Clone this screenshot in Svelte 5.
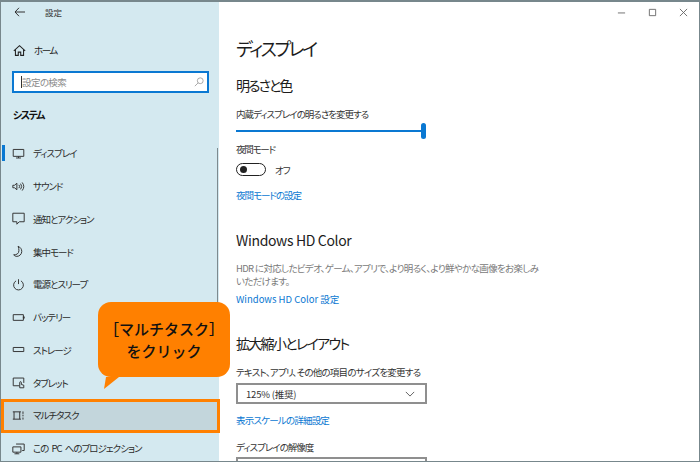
<script>
	const navItems = [
		{ label: 'ディスプレイ', icon: 'display', current: true },
		{ label: 'サウンド', icon: 'sound' },
		{ label: '通知とアクション', icon: 'notify' },
		{ label: '集中モード', icon: 'moon' },
		{ label: '電源とスリープ', icon: 'power' },
		{ label: 'バッテリー', icon: 'battery' },
		{ label: 'ストレージ', icon: 'storage' },
		{ label: 'タブレット', icon: 'tablet' },
		{ label: 'マルチタスク', icon: 'multi', selected: true },
		{ label: 'この PC へのプロジェクション', icon: 'project' }
	];
</script>

{#snippet navIcon(name)}
	<svg class="nav-icon" viewBox="0 0 16 16" fill="none" stroke="#333" stroke-width="1.2">
		{#if name === 'display'}
			<path d="M1.500 3h13v8.500h-13zM8 11.500v2M5 13.500h6" />
		{:else if name === 'sound'}
			<path d="M1 6.500h2L6 4v8L3 9.500H1zM8.500 6a3 3 0 0 1 0 4M10.500 4.500a5.500 5.500 0 0 1 0 7M12.500 3a8 8 0 0 1 0 10" />
		{:else if name === 'notify'}
			<path d="M1 1.500h14v10.500H9L6 15v-3H1z" />
		{:else if name === 'moon'}
			<path d="M7.500 1.500c3 1.500 4.500 3.500 4.500 6.500 0 3.500-3 6-6 6-1.500 0-3-.6-4-2 3.500.5 6.500-1.500 6.500-5 0-2-.2-3.500-1-5.500z" />
		{:else if name === 'power'}
			<path d="M5 3.500a6 6 0 1 0 6 0M8 1.500v6" />
		{:else if name === 'battery'}
			<path d="M1.500 4.500h12.500v7H1.500zM14 7h1v2h-1z" />
		{:else if name === 'storage'}
			<path d="M1.500 5.500h13v5h-13z" />
		{:else if name === 'tablet'}
			<path d="M9 12H1.500V2.500h13v6M9.500 14.500V8a1 1 0 0 1 2 0v2.500l3 .8v3.200z" />
		{:else if name === 'multi'}
			<path d="M1 3.500h10M1 12.500h10M2.500 3.500v9M9.500 3.500v9M13.500 3v3M13.500 7v2M13.500 10.500v2.500" />
		{:else}
			<path d="M5 2.500h10v8h-2.500M1 6h10v6.500H1zM3 14.500h6M6 12.500v2" />
		{/if}
	</svg>
{/snippet}

<div class="window">
	<aside class="sidebar">
		<header class="titlebar">
			<svg class="back" viewBox="0 0 12 10" fill="none" stroke="#333" stroke-width="1">
				<path d="M5 .8 1 5l4 4.200M1 5h10" />
			</svg>
			<span class="app-title">設定</span>
		</header>

		<div class="home">
			<svg class="nav-icon" viewBox="0 0 16 16" fill="none" stroke="#222" stroke-width="1.300">
				<path d="M1 8.500 8 2l7 6.500M3 7v7h3.500v-4h3v4H13V7" />
			</svg>
			<span class="home-text">ホーム</span>
		</div>

		<div class="search">
			<span class="caret"></span>
			<span class="placeholder">設定の検索</span>
			<svg class="search-icon" viewBox="0 0 12 12" fill="none" stroke="#9a9a9a" stroke-width="1">
				<circle cx="7.500" cy="4.500" r="3.500" />
				<path d="M5 7 1 11" />
			</svg>
		</div>

		<div class="section-label">システム</div>

		<nav class="nav">
			{#each navItems as item}
				<div class="nav-item" class:selected={item.selected}>
					{#if item.current}<span class="current-bar"></span>{/if}
					{@render navIcon(item.icon)}
					<span>{item.label}</span>
				</div>
			{/each}
		</nav>

		<div class="scrollbar"></div>
	</aside>

	<main class="content">
		<h1>ディスプレイ</h1>

		<h2 class="first">明るさと色</h2>
		<p class="label">内蔵ディスプレイの明るさを変更する</p>
		<div class="slider"><span class="thumb"></span></div>

		<p class="label night">夜間モード</p>
		<div class="toggle-row">
			<span class="toggle"><span class="knob"></span></span>
			<span class="toggle-text">オフ</span>
		</div>
		<a class="link night-link" href="#night">夜間モードの設定</a>

		<h2 class="hd">Windows HD Color</h2>
		<p class="desc">HDR に対応したビデオ、ゲーム、アプリで、より明るく、より鮮やかな画像をお楽しみ<br />いただけます。</p>
		<a class="link hd-link" href="#hd">Windows HD Color 設定</a>

		<h2 class="scale">拡大縮小とレイアウト</h2>
		<p class="label tight">テキスト、アプリ、その他の項目のサイズを変更する</p>
		<div class="select">
			<span>125% (推奨)</span>
			<svg viewBox="0 0 12 7" fill="none" stroke="#444" stroke-width="1"><path d="M1 1l5 5 5-5" /></svg>
		</div>
		<a class="link scale-link" href="#scale">表示スケールの詳細設定</a>
		<p class="label res">ディスプレイの解像度</p>
		<div class="select partial"></div>
	</main>

	<div class="controls">
		<svg viewBox="0 0 10 10" stroke="#666" fill="none"><path d="M1 5.500h8" /></svg>
		<svg viewBox="0 0 10 10" stroke="#666" fill="none"><path d="M1.500 1.500h7v7h-7z" /></svg>
		<svg viewBox="0 0 10 10" stroke="#666" fill="none"><path d="M1 1l8 8M9 1l-8 8" /></svg>
	</div>

	<div class="callout">
		<span>［マルチタスク］<br />をクリック</span>
		<svg class="tail" viewBox="0 0 15 12"><path d="M2 0h13L0 12z" fill="#ff8000" /></svg>
	</div>
</div>

<style>
	:global(body) {
		margin: 0;
	}

	.window {
		position: relative;
		display: flex;
		box-sizing: border-box;
		width: 700px;
		height: 462px;
		overflow: hidden;
		border: 1px solid #77878c;
		border-top-width: 2px;
		background: #fff;
		color: #222;
		font-family: 'Noto Sans CJK JP', 'Noto Sans', sans-serif;
		font-size: 9.500px;
		font-feature-settings: 'palt';
	}

	.sidebar {
		position: relative;
		flex: 0 0 218px;
		background: #d4e9f0;
	}

	.titlebar {
		display: flex;
		align-items: center;
		height: 20px;
		padding-left: 13px;
	}

	.back {
		width: 12px;
		height: 10px;
	}

	.app-title {
		margin-left: 19px;
		font-size: 8.500px;
		color: #333;
	}

	.home {
		display: flex;
		align-items: center;
		gap: 8px;
		height: 20px;
		margin-top: 18px;
		padding-left: 12px;
	}

	.home-text {
		letter-spacing: -1.500px;
	}

	.nav-icon {
		flex: none;
		width: 13px;
		height: 13px;
	}

	.search {
		display: flex;
		align-items: center;
		box-sizing: border-box;
		height: 22px;
		margin: 11px 10px 0 11px;
		padding: 0 3px 0 7px;
		border: 2px solid #0a78d2;
		background: #fff;
	}

	.caret {
		width: 1px;
		height: 12px;
		background: #333;
	}

	.placeholder {
		flex: 1;
		color: #8c8c8c;
		letter-spacing: -0.600px;
	}

	.search-icon {
		width: 10px;
		height: 10px;
	}

	.section-label {
		margin-top: 14px;
		padding-left: 12px;
		font-size: 10px;
		font-weight: 700;
		letter-spacing: -1.500px;
		line-height: 16px;
		color: #111;
	}

	.nav {
		margin-top: 14px;
	}

	.nav-item {
		position: relative;
		display: flex;
		align-items: center;
		gap: 8px;
		box-sizing: border-box;
		height: 32.750px;
		padding-left: 11px;
		letter-spacing: -1px;
		word-spacing: 2px;
		color: #2b2b2b;
	}

	.nav-item.selected {
		background: #c3d6dc;
	}

	.nav-item.selected::after {
		content: '';
		position: absolute;
		inset: 0 -1px -1px 0;
		border: 3px solid #ff8000;
	}

	.current-bar {
		position: absolute;
		left: 1px;
		top: 8px;
		width: 3px;
		height: 16px;
		background: #0a78d2;
	}

	.scrollbar {
		position: absolute;
		top: 146px;
		right: 1px;
		width: 1.500px;
		height: 200px;
		background: #7d8a8f;
	}

	.content {
		flex: 1;
		padding: 33px 0 0 17px;
		min-width: 0;
	}

	h1 {
		margin: 0;
		font-size: 18px;
		font-weight: 400;
		letter-spacing: -2.400px;
		line-height: 26px;
		color: #1c1c1c;
	}

	h2 {
		margin: 0;
		font-size: 14px;
		font-weight: 400;
		line-height: 20px;
		color: #1c1c1c;
	}

	h2.first {
		margin-top: 14px;
		letter-spacing: -2px;
	}

	h2.hd {
		margin-top: 28px;
		letter-spacing: -0.350px;
	}

	h2.scale {
		margin-top: 27px;
		letter-spacing: -1.700px;
	}

	.label {
		margin: 12px 0 0;
		font-size: 9.500px;
		letter-spacing: -1px;
		line-height: 14px;
		color: #333;
	}

	.label.tight {
		margin-top: 12px;
		letter-spacing: -0.750px;
	}

	.slider {
		position: relative;
		width: 190px;
		height: 2px;
		margin-top: 9px;
		background: #0a78d2;
	}

	.thumb {
		position: absolute;
		right: 0;
		top: -7px;
		width: 5px;
		height: 16px;
		border-radius: 2.500px;
		background: #0a78d2;
	}

	.label.night {
		margin-top: 10px;
		letter-spacing: -1.200px;
	}

	.toggle-row {
		display: flex;
		align-items: center;
		gap: 9px;
		margin-top: 7px;
		height: 13px;
	}

	.toggle {
		display: flex;
		align-items: center;
		box-sizing: border-box;
		width: 30px;
		height: 13px;
		padding-left: 3px;
		border: 1.500px solid #222;
		border-radius: 7px;
	}

	.knob {
		width: 7px;
		height: 7px;
		border-radius: 50%;
		background: #222;
	}

	.toggle-text {
		letter-spacing: -1px;
		color: #333;
	}

	.link {
		display: block;
		font-size: 9.500px;
		letter-spacing: -1px;
		line-height: 14px;
		color: #0a78d2;
		text-decoration: none;
	}

	.night-link {
		margin-top: 12px;
	}

	.hd-link {
		letter-spacing: 0;
	}

	.desc {
		margin: 12px 0 4px;
		font-size: 9.500px;
		letter-spacing: -0.670px;
		line-height: 13px;
		color: #7a7a7a;
	}

	.select {
		display: flex;
		align-items: center;
		justify-content: space-between;
		box-sizing: border-box;
		width: 191px;
		height: 21px;
		margin-top: 4px;
		padding: 0 10px 0 8px;
		letter-spacing: -0.200px;
		border: 2px solid #8f8f8f;
		color: #333;
	}

	.select svg {
		width: 10px;
		height: 6px;
	}

	.scale-link {
		margin-top: 9px;
		letter-spacing: -0.800px;
	}

	.label.res {
		margin-top: 13px;
	}

	.select.partial {
		margin-top: 3px;
	}

	.controls {
		position: absolute;
		top: 0;
		right: 0;
		display: flex;
		gap: 22px;
		padding: 6px 11px 0 0;
	}

	.controls svg {
		width: 9px;
		height: 9px;
	}

	.callout {
		position: absolute;
		left: 97px;
		top: 300px;
		display: flex;
		align-items: center;
		justify-content: center;
		width: 132px;
		height: 75px;
		border-radius: 13px;
		background: #ff8000;
		color: #111;
		font-size: 15px;
		font-weight: 500;
		font-feature-settings: normal;
		line-height: 22px;
		text-align: center;
	}

	.tail {
		position: absolute;
		left: 6px;
		top: 75px;
		width: 15px;
		height: 12px;
	}
</style>
